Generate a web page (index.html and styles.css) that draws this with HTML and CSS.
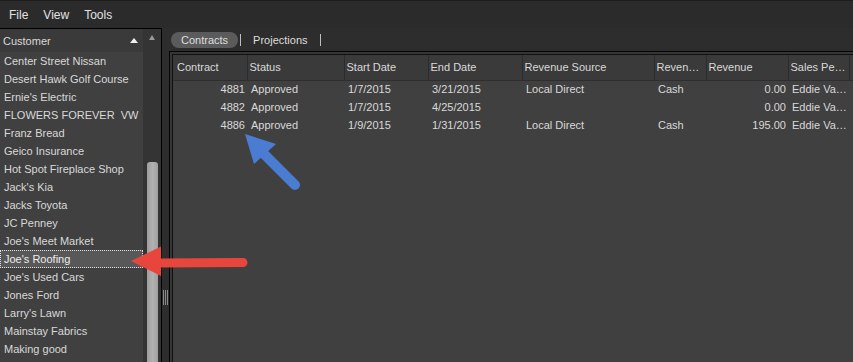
FILE: index.html
```html
<!DOCTYPE html>
<html lang="en">

<head>
    <meta charset="UTF-8" />
    <title>Contracts</title>
    <link rel="stylesheet" href="styles.css">
</head>

<body>
    <!-- Menu -->
    <div class="menubar">
        <span>File</span>
        <span>View</span>
        <span>Tools</span>
    </div>

    <div class="workspace">
        <!-- Customer list -->
        <div class="sidebar">
            <div class="customer-list">
                <div class="list-header">Customer <span class="sort-up"></span></div>
                <div class="list-item">Center Street Nissan</div>
                <div class="list-item">Desert Hawk Golf Course</div>
                <div class="list-item">Ernie's Electric</div>
                <div class="list-item">FLOWERS FOREVER &nbsp;VW</div>
                <div class="list-item">Franz Bread</div>
                <div class="list-item">Geico Insurance</div>
                <div class="list-item">Hot Spot Fireplace Shop</div>
                <div class="list-item">Jack's Kia</div>
                <div class="list-item">Jacks Toyota</div>
                <div class="list-item">JC Penney</div>
                <div class="list-item">Joe's Meet Market</div>
                <div class="list-item selected">Joe's Roofing</div>
                <div class="list-item">Joe's Used Cars</div>
                <div class="list-item">Jones Ford</div>
                <div class="list-item">Larry's Lawn</div>
                <div class="list-item">Mainstay Fabrics</div>
                <div class="list-item">Making good</div>
            </div>
            <div class="vscroll">
                <div class="scroll-btn"><span class="arrow-up"></span></div>
                <div class="scroll-track">
                    <div class="scroll-thumb"></div>
                </div>
            </div>
        </div>

        <div class="splitter">
            <div class="grip"></div>
        </div>

        <!-- Contracts grid -->
        <div class="content">
            <div class="tabs">
                <span class="tab active">Contracts</span>
                <span class="tab-sep"></span>
                <span class="tab">Projections</span>
                <span class="tab-sep"></span>
            </div>
            <div class="grid-frame">
                <div class="grid">
                    <table>
                        <colgroup>
                            <col style="width:74px">
                            <col style="width:97px">
                            <col style="width:84px">
                            <col style="width:94px">
                            <col style="width:132px">
                            <col style="width:52px">
                            <col style="width:82px">
                            <col style="width:61px">
                            <col style="width:4px">
                        </colgroup>
                        <thead>
                            <tr>
                                <th>Contract</th>
                                <th>Status</th>
                                <th>Start Date</th>
                                <th>End Date</th>
                                <th>Revenue Source</th>
                                <th>Reven…</th>
                                <th>Revenue</th>
                                <th>Sales Pe…</th>
                                <th></th>
                            </tr>
                        </thead>
                        <tbody>
                            <tr>
                                <td class="num">4881</td>
                                <td>Approved</td>
                                <td>1/7/2015</td>
                                <td>3/21/2015</td>
                                <td>Local Direct</td>
                                <td>Cash</td>
                                <td class="num">0.00</td>
                                <td>Eddie Va…</td>
                                <td></td>
                            </tr>
                            <tr>
                                <td class="num">4882</td>
                                <td>Approved</td>
                                <td>1/7/2015</td>
                                <td>4/25/2015</td>
                                <td></td>
                                <td></td>
                                <td class="num">0.00</td>
                                <td>Eddie Va…</td>
                                <td></td>
                            </tr>
                            <tr>
                                <td class="num">4886</td>
                                <td>Approved</td>
                                <td>1/9/2015</td>
                                <td>1/31/2015</td>
                                <td>Local Direct</td>
                                <td>Cash</td>
                                <td class="num">195.00</td>
                                <td>Eddie Va…</td>
                                <td></td>
                            </tr>
                        </tbody>
                    </table>
                </div>
            </div>
        </div>
    </div>

    <!-- Annotation arrows -->
    <svg class="callouts" width="853" height="362" viewBox="0 0 853 362">
        <line x1="158" y1="263" x2="243" y2="262.5" stroke="#e8463d" stroke-width="9" stroke-linecap="round" />
        <path d="M131 261 L161 246.5 L161 276 Z" fill="#e8463d" />
        <line x1="262" y1="152" x2="295" y2="185" stroke="#4a7dd2" stroke-width="10" stroke-linecap="round" />
        <path d="M245 134 L276 144 L254 164 Z" fill="#4a7dd2" />
    </svg>
</body>

</html>
```

FILE: styles.css
```css
* {
    box-sizing: border-box;
}

body {
    margin: 0;
    width: 853px;
    height: 362px;
    overflow: hidden;
    position: relative;
    background: #2b2b2b;
    color: #d9d9d9;
    font-family: "Liberation Sans", Arial, sans-serif;
    font-size: 11px;
}

.menubar {
    height: 28px;
    border-top: 1px solid #1c1c1c;
    display: flex;
    align-items: center;
    gap: 15px;
    padding-left: 9px;
    font-size: 12px;
    color: #e2e2e2;
}

.workspace {
    display: flex;
    height: 334px;
    overflow: hidden;
}

/* Sidebar */
.sidebar {
    width: 162px;
    display: flex;
    border-top: 1px solid #000;
    border-right: 1px solid #000;
}

.customer-list {
    width: 143px;
    background: #404040;
    overflow: hidden;
}

.list-header {
    height: 23px;
    display: flex;
    align-items: center;
    justify-content: space-between;
    padding: 0 5px 0 3px;
    background: #3a3a3a;
}

.sort-up {
    width: 0;
    height: 0;
    border-left: 4px solid transparent;
    border-right: 4px solid transparent;
    border-bottom: 5px solid #f0f0f0;
}

.list-item {
    height: 18px;
    line-height: 18px;
    padding-left: 3px;
    white-space: nowrap;
    border: 1px solid transparent;
    display: flex;
    align-items: center;
}

.list-item.selected {
    background: #585858;
    border: 1px dotted #e0e0e0;
    color: #eee;
}

.vscroll {
    width: 18px;
    background: #343434;
    display: flex;
    flex-direction: column;
}

.scroll-btn {
    height: 18px;
    display: flex;
    justify-content: center;
    padding-top: 6px;
}

.arrow-up {
    width: 0;
    height: 0;
    border-left: 3.5px solid transparent;
    border-right: 3.5px solid transparent;
    border-bottom: 5px solid #9a9a9a;
}

.scroll-track {
    flex: 1;
    display: flex;
    flex-direction: column;
    padding: 115px 3px 0 4px;
}

.scroll-thumb {
    flex: 1;
    border-radius: 3px 3px 0 0;
    background: linear-gradient(to right, #9d9d9d, #b2b2b2 50%, #a0a0a0);
}

/* Splitter */
.splitter {
    width: 7px;
    background: #2d2d2d;
    padding-top: 262px;
    display: flex;
    justify-content: center;
}

.grip {
    width: 5px;
    height: 15px;
    background: repeating-linear-gradient(to right, #8a8a8a 0 1px, transparent 1px 2px);
}

/* Main */
.content {
    flex: 1;
    min-width: 0;
    display: flex;
    flex-direction: column;
    background: #2d2d2d;
}

.tabs {
    height: 23px;
    display: flex;
    align-items: center;
    padding-left: 2px;
}

.tab {
    height: 16px;
    line-height: 16px;
    padding: 0 10px;
    border-radius: 8px;
    color: #dedede;
}

.tab.active {
    background: #5b5b5b;
}

.tab-sep {
    width: 1px;
    height: 12px;
    background: #bdbdbd;
    margin: 0 2px;
}

.grid-frame {
    flex: 1;
    border: 1px solid #050505;
    border-right: none;
    border-bottom: none;
    padding: 2px 0 0 2px;
    background: #363636;
}

.grid {
    height: 100%;
    border-top: 1px solid #101010;
    border-left: 1px solid #101010;
    background: #404040;
    overflow: hidden;
}

table {
    border-collapse: collapse;
    table-layout: fixed;
    width: 680px;
}

th {
    height: 25px;
    font-weight: normal;
    text-align: left;
    padding: 0 0 0 2px;
    background: #3a3a3a;
    border-left: 1px solid #2c2c2c;
    border-bottom: 1px solid #2e2e2e;
    white-space: nowrap;
    overflow: hidden;
}

th:first-child {
    border-left: none;
    padding-left: 4px;
}

td {
    height: 18px;
    padding: 0 0 0 4px;
    white-space: nowrap;
    overflow: hidden;
}

td.num {
    text-align: right;
    padding: 0 2px 0 0;
}

.callouts {
    position: absolute;
    top: 0;
    left: 0;
    pointer-events: none;
}
```
